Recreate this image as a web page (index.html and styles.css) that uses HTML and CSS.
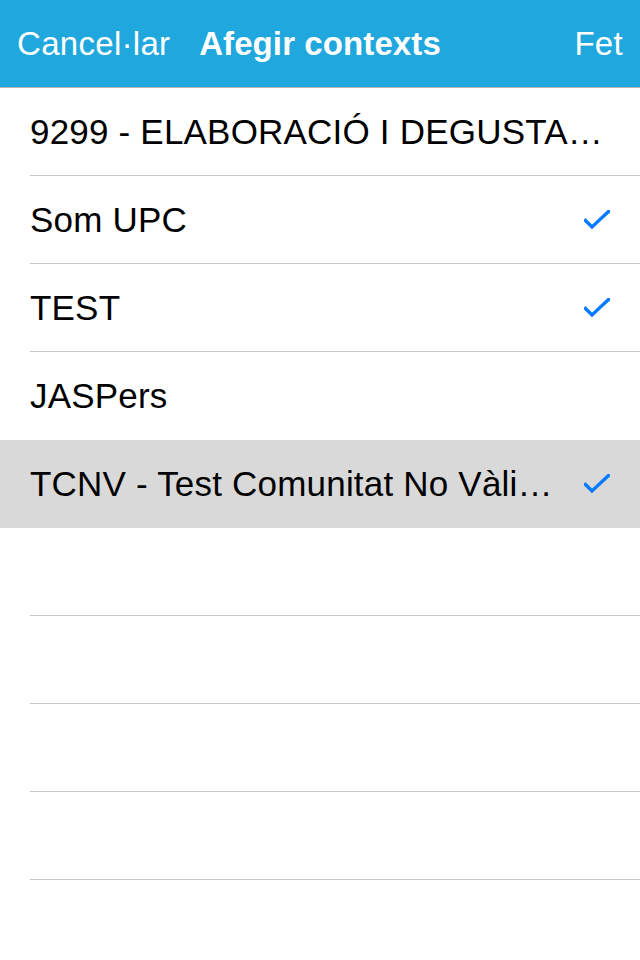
FILE: index.html
```html
<!DOCTYPE html>
<html lang="ca">
<head>
<meta charset="utf-8">
<title>Afegir contexts</title>
<link rel="stylesheet" href="styles.css">
</head>
<body>
<header class="navbar">
  <span class="nav-btn nav-left">Cancel·lar</span>
  <span class="nav-title">Afegir contexts</span>
  <span class="nav-btn nav-right">Fet</span>
</header>
<ul class="list">
  <li class="row"><span class="label">9299 - ELABORACIÓ I DEGUSTA…</span></li>
  <li class="row"><span class="label">Som UPC</span><svg class="check" viewBox="0 0 26 20"><path d="M1.5 10.5 L8 17 L24.5 1.5"/></svg></li>
  <li class="row"><span class="label">TEST</span><svg class="check" viewBox="0 0 26 20"><path d="M1.5 10.5 L8 17 L24.5 1.5"/></svg></li>
  <li class="row"><span class="label">JASPers</span></li>
  <li class="row selected"><span class="label">TCNV - Test Comunitat No Vàli…</span><svg class="check" viewBox="0 0 26 20"><path d="M1.5 10.5 L8 17 L24.5 1.5"/></svg></li>
  <li class="row empty"></li>
  <li class="row empty"></li>
  <li class="row empty"></li>
  <li class="row empty"></li>
  <li class="row empty"></li>
</ul>
</body>
</html>
```
FILE: styles.css
```css
* { box-sizing: border-box; }
html, body {
  margin: 0;
  padding: 0;
  background: #ffffff;
  font-family: "Liberation Sans", Arial, sans-serif;
  overflow: hidden;
  height: 960px;
}
.navbar {
  height: 88px;
  background: #20a7de;
  border-bottom: 1px solid #b5b5b5;
  display: flex;
  align-items: center;
  justify-content: space-between;
  padding: 0 17px 0 17px;
  position: relative;
  color: #ffffff;
}
.nav-btn {
  font-size: 33px;
  font-weight: 400;
  letter-spacing: 0.3px;
}
.nav-title {
  position: absolute;
  left: 0;
  right: 0;
  text-align: center;
  font-size: 33px;
  font-weight: 700;
  letter-spacing: 0.1px;
  pointer-events: none;
}
.list {
  list-style: none;
  margin: 0;
  padding: 0;
}
.row {
  height: 88px;
  display: flex;
  align-items: center;
  padding: 0 30px 0 30px;
  position: relative;
}
.row::after {
  content: "";
  position: absolute;
  left: 30px;
  right: 0;
  bottom: 0;
  height: 1px;
  background: #c8c7cc;
}
.row.selected {
  background: #d9d9d9;
}
.row.selected::after,
.row:nth-child(4)::after {
  display: none;
}
.label {
  flex: 1;
  min-width: 0;
  white-space: nowrap;
  font-size: 35px;
  color: #000000;
  letter-spacing: 0.2px;
}
.check {
  width: 26px;
  height: 20px;
  margin-left: 22px;
  flex: none;
  fill: none;
  stroke: #0a7aff;
  stroke-width: 3.4;
  stroke-linecap: square;
}
```
